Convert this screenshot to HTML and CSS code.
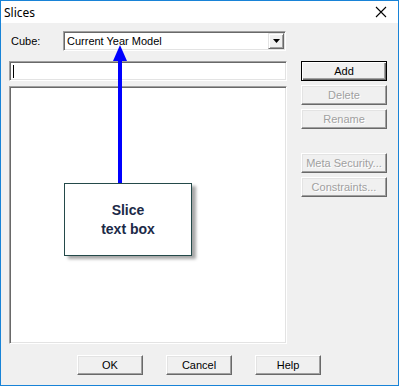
FILE: index.html
```html
<!DOCTYPE html>
<html lang="en">
<head>
  <meta charset="UTF-8">
  <title>Slices</title>
  <link rel="stylesheet" href="styles.css">
</head>
<body>
  <div class="window">
    <div class="titlebar">
      <span class="title">Slices</span>
      <svg class="close" width="12" height="12" viewBox="0 0 12 12">
        <path d="M1 1 L11 11 M11 1 L1 11" stroke="#000" stroke-width="1.1" fill="none"/>
      </svg>
    </div>

    <div class="dialog">
      <div class="cube-row">
        <span class="label">Cube:</span>
        <div class="combo">
          <span class="combo-text">Current Year Model</span>
          <span class="combo-btn">
            <svg width="7" height="4" viewBox="0 0 7 4"><path d="M0 0 H7 L3.5 4 Z" fill="#000"/></svg>
          </span>
        </div>
      </div>

      <div class="main">
        <div class="left">
          <div class="field"><span class="caret"></span></div>
          <div class="list"></div>
        </div>
        <div class="right">
          <button class="btn default">Add</button>
          <button class="btn" disabled>Delete</button>
          <button class="btn" disabled>Rename</button>
          <button class="btn spaced" disabled>Meta Security...</button>
          <button class="btn" disabled>Constraints...</button>
        </div>
      </div>

      <div class="footer">
        <button class="btn wide">OK</button>
        <button class="btn wide">Cancel</button>
        <button class="btn wide">Help</button>
      </div>
    </div>

    <!-- annotation drawn over the dialog -->
    <svg class="arrow" width="16" height="140" viewBox="0 0 16 140">
      <path d="M6 14 H10 V140 H6 Z" fill="#0000ff"/>
      <path d="M8 0 L15 16 H1 Z" fill="#0000ff"/>
    </svg>
    <div class="callout">Slice<br>text box</div>
  </div>
</body>
</html>
```

FILE: styles.css
```css
body {
  margin: 0;
  padding: 0;
  font-family: "Liberation Sans", Arial, sans-serif;
  font-size: 11px;
  color: #000;
}
.window {
  position: relative;
  width: 397px;
  height: 384px;
  border: 1px solid #1883d7;
  background-color: #f0f0f0;
}
.titlebar {
  height: 22px;
  background-color: #fff;
  display: flex;
  align-items: center;
  justify-content: space-between;
  padding: 0 11px 0 3px;
}
.title {
  font-family: "Noto Sans", "Liberation Sans", sans-serif;
  font-size: 12px;
}
.close {
  display: block;
}
.dialog {
  padding: 8px 10px 0 8px;
}
.cube-row {
  display: flex;
  align-items: center;
  height: 20px;
}
.label {
  box-sizing: border-box;
  width: 54px;
  padding-left: 2px;
}
.combo {
  width: 219px;
  height: 16px;
  background-color: #fff;
  border-top: 1px solid #a0a0a0;
  border-left: 1px solid #a0a0a0;
  border-bottom: 1px solid #fff;
  border-right: 1px solid #fff;
  box-shadow: inset 1px 1px #696969, inset -1px -1px #e3e3e3;
  padding: 1px;
  display: flex;
  align-items: center;
  justify-content: space-between;
}
.combo-text {
  padding-left: 2px;
}
.combo-btn {
  width: 16px;
  height: 16px;
  box-sizing: border-box;
  background-color: #f0f0f0;
  border-top: 1px solid #e3e3e3;
  border-left: 1px solid #e3e3e3;
  border-bottom: 1px solid #696969;
  border-right: 1px solid #696969;
  box-shadow: inset 1px 1px #fff, inset -1px -1px #a0a0a0;
  display: flex;
  align-items: center;
  justify-content: center;
}
.main {
  display: flex;
  gap: 14px;
  margin-top: 10px;
}
.left {
  width: 278px;
  display: flex;
  flex-direction: column;
  gap: 5px;
}
.field, .list {
  box-sizing: border-box;
  background-color: #fff;
  border-top: 1px solid #a0a0a0;
  border-left: 1px solid #a0a0a0;
  border-bottom: 1px solid #fff;
  border-right: 1px solid #fff;
  box-shadow: inset 1px 1px #696969, inset -1px -1px #e3e3e3;
}
.field {
  height: 20px;
  padding: 3px 0 0 3px;
}
.caret {
  display: block;
  width: 1px;
  height: 13px;
  background-color: #000;
}
.list {
  height: 258px;
}
.right {
  width: 86px;
  display: flex;
  flex-direction: column;
  gap: 4px;
}
.btn {
  box-sizing: border-box;
  height: 20px;
  padding: 0;
  font-family: "Liberation Sans", Arial, sans-serif;
  font-size: 11px;
  color: #000;
  background-color: #f0f0f0;
  border-top: 1px solid #fff;
  border-left: 1px solid #fff;
  border-bottom: 1px solid #696969;
  border-right: 1px solid #696969;
  box-shadow: inset -1px -1px #a0a0a0, inset 1px 1px #e3e3e3;
}
.btn:disabled {
  color: #a0a0a0;
  text-shadow: 1px 1px #fff;
}
.btn.default {
  border: 1px solid #000;
  box-shadow: inset 1px 1px #fff, inset -1px -1px #696969, inset -2px -2px #a0a0a0;
}
.btn.spaced {
  margin-top: 20px;
}
.footer {
  display: flex;
  gap: 23px;
  margin-top: 11px;
  padding-left: 68px;
}
.btn.wide {
  width: 66px;
}
.arrow {
  position: absolute;
  left: 111px;
  top: 44px;
}
.callout {
  position: absolute;
  left: 63px;
  top: 182px;
  width: 128px;
  height: 73px;
  box-sizing: border-box;
  background-color: #fff;
  border: 1px solid #244a4a;
  box-shadow: 4px 3px 3px rgba(0, 0, 0, 0.35);
  font-family: "Liberation Sans", Arial, sans-serif;
  font-size: 14px;
  font-weight: bold;
  line-height: 19px;
  color: #1c2a48;
  text-align: center;
  padding-top: 17px;
}
```
